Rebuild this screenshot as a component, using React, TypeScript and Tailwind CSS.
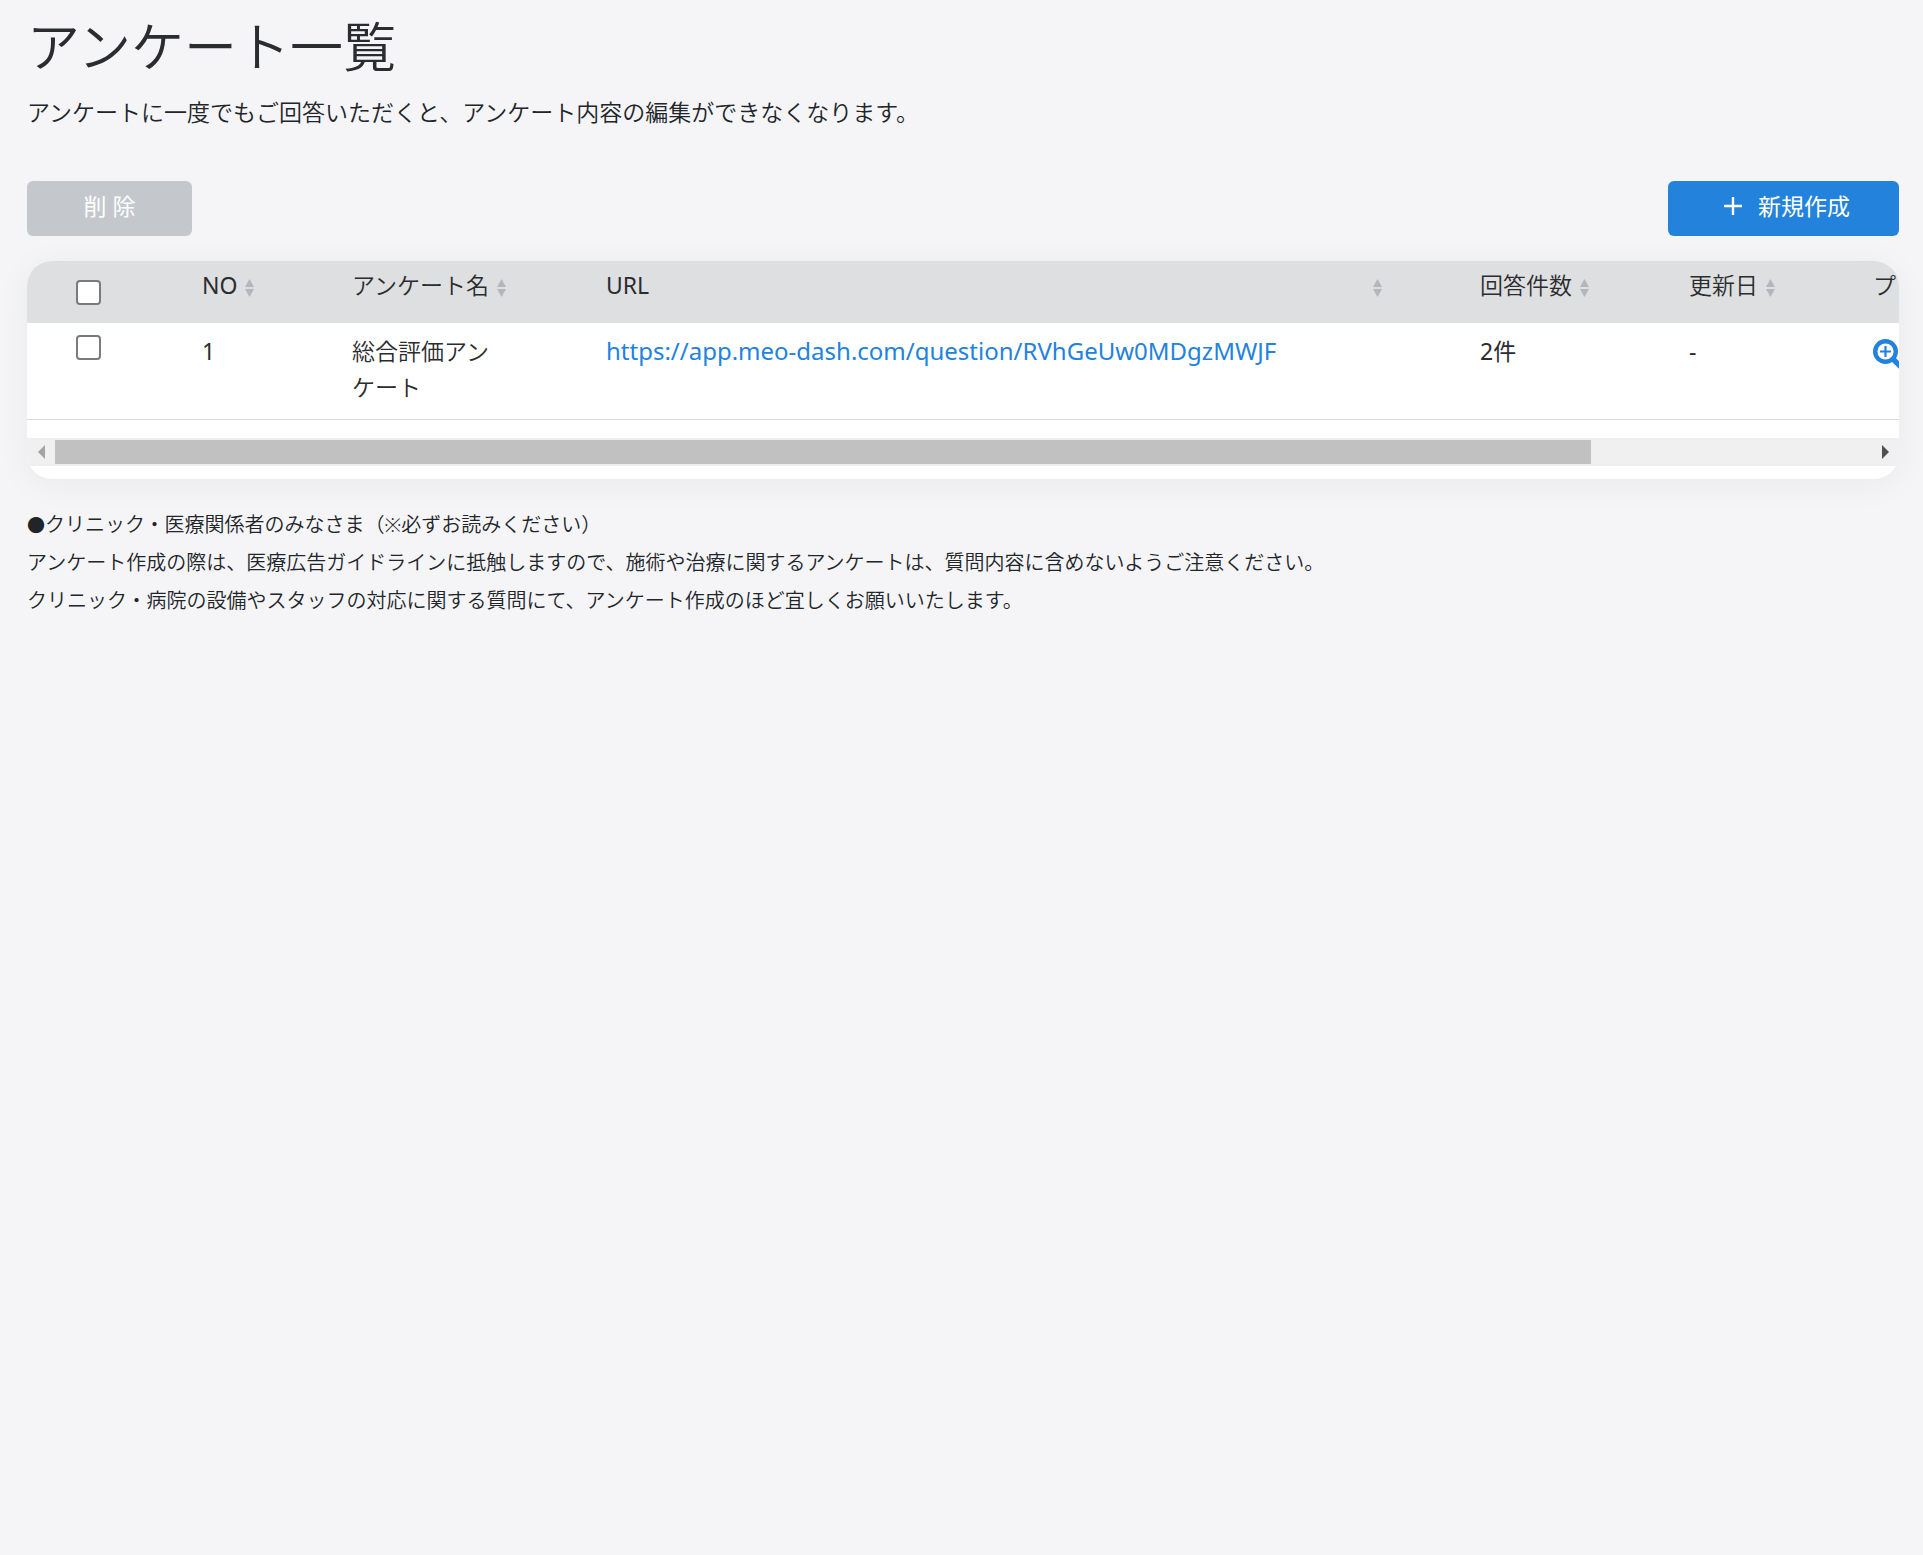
import React, { useRef, useState } from "react";

interface Survey {
  id: number;
  name: string;
  url: string;
  count: number;
  updatedAt: string;
}

const surveys: Survey[] = [
  {
    id: 1,
    name: "総合評価アンケート",
    url: "https://app.meo-dash.com/question/RVhGeUw0MDgzMWJF",
    count: 2,
    updatedAt: "-",
  },
];

const SortIcon = () => (
  <svg viewBox="0 0 9 18" className="mt-1.5 h-[18px] w-[9px] shrink-0 fill-[#b4b6bb]" aria-hidden="true">
    <path d="M4.5 0 9 8H0z" />
    <path d="M0 10h9l-4.5 8z" />
  </svg>
);

const PlusIcon = () => (
  <svg viewBox="0 0 18 18" className="size-[18px]" fill="none" stroke="currentColor" strokeWidth="2.4" aria-hidden="true">
    <path d="M9 0v18M0 9h18" />
  </svg>
);

const ZoomInIcon = () => (
  <svg viewBox="0 0 32 32" className="size-8" fill="none" stroke="currentColor" aria-hidden="true">
    <circle cx="12.5" cy="12.5" r="10.3" strokeWidth="4.4" />
    <path d="M12.5 7v11M7 12.5h11" strokeWidth="2.2" />
    <path d="m20 20 9.5 9.5" strokeWidth="5.4" />
  </svg>
);

interface HeaderCellProps {
  label: string;
  latin?: boolean;
  spread?: boolean;
}

const HeaderCell: React.FC<HeaderCellProps> = ({ label, latin, spread }) => (
  <th className={`px-[49px] pt-1.5 pb-5 text-left align-top ${latin ? "font-normal" : "font-[350]"}`}>
    <button
      type="button"
      className={`flex items-center gap-2 whitespace-nowrap ${spread ? "w-full justify-between" : ""}`}
    >
      {label}
      <SortIcon />
    </button>
  </th>
);

const checkboxClass =
  "block size-[25px] appearance-none rounded-[4px] border-2 border-[#7b7b7b] bg-white checked:bg-[#2282dc]";

const SurveyTable = () => {
  const scroller = useRef<HTMLDivElement>(null);
  const [offset, setOffset] = useState(0);

  const handleScroll = () => {
    const el = scroller.current;
    if (el) setOffset((el.scrollLeft / el.scrollWidth) * 100);
  };

  return (
    <div className="mt-[25px] overflow-hidden rounded-[25px] bg-white pb-[13px] shadow-[0_5px_35px_rgba(0,0,0,0.05)]">
      <div
        ref={scroller}
        onScroll={handleScroll}
        className="overflow-x-auto pb-[18px] [scrollbar-width:none]"
      >
        <table className="w-[2213px] table-fixed border-collapse text-[23px] leading-9 text-[#2b2c2f]">
          <colgroup>
            <col className="w-[126px]" />
            <col className="w-[150px]" />
            <col className="w-[254px]" />
            <col className="w-[874px]" />
            <col className="w-[209px]" />
            <col className="w-[184px]" />
            <col />
          </colgroup>
          <thead className="bg-[#dedfe1]">
            <tr>
              <th className="pt-[19px] pl-[49px] align-top">
                <input type="checkbox" aria-label="すべて選択" className={checkboxClass} />
              </th>
              <HeaderCell label="NO" latin />
              <HeaderCell label="アンケート名" />
              <HeaderCell label="URL" latin spread />
              <HeaderCell label="回答件数" />
              <HeaderCell label="更新日" />
              <th className="px-[49px] pt-1.5 text-left align-top font-[350]">プレビュー</th>
            </tr>
          </thead>
          <tbody>
            {surveys.map((survey) => (
              <tr key={survey.id} className="border-b border-[#d9dadc] align-top">
                <td className="pt-3 pl-[49px]">
                  <input type="checkbox" aria-label={survey.name} className={checkboxClass} />
                </td>
                <td className="px-[49px] pt-2.5">{survey.id}</td>
                <td className="px-[49px] pt-2.5 pb-3.5 font-[350]">{survey.name}</td>
                <td className="px-[49px] pt-2.5">
                  <a href={survey.url} className="text-2xl leading-9 text-[#2282dc]">
                    {survey.url}
                  </a>
                </td>
                <td className="px-[49px] pt-2.5">{survey.count}件</td>
                <td className="px-[49px] pt-2.5">{survey.updatedAt}</td>
                <td className="px-[49px] pt-4">
                  <button type="button" aria-label="プレビュー" className="block text-[#2282dc]">
                    <ZoomInIcon />
                  </button>
                </td>
              </tr>
            ))}
          </tbody>
        </table>
      </div>

      {/* 横スクロールバー */}
      <div className="flex h-7 bg-[#f0f0f0]">
        <button
          type="button"
          aria-label="左へスクロール"
          onClick={() => scroller.current?.scrollBy({ left: -120 })}
          className="flex w-7 items-center justify-center text-[#a3a3a3]"
        >
          <svg viewBox="0 0 7 14" className="h-[14px] w-[7px] fill-current" aria-hidden="true">
            <path d="M7 0v14L0 7z" />
          </svg>
        </button>
        <div className="flex-1 py-[2px]">
          <div className="h-full w-[84.6%] bg-[#c1c1c1]" style={{ marginLeft: `${offset}%` }} />
        </div>
        <button
          type="button"
          aria-label="右へスクロール"
          onClick={() => scroller.current?.scrollBy({ left: 120 })}
          className="flex w-7 items-center justify-center text-[#505050]"
        >
          <svg viewBox="0 0 7 14" className="h-[14px] w-[7px] fill-current" aria-hidden="true">
            <path d="M0 0v14l7-7z" />
          </svg>
        </button>
      </div>
    </div>
  );
};

const App = () => {
  return (
    <main
      lang="ja"
      className="min-h-screen bg-[#f5f5f8] pr-6 pl-[27px] font-['Noto_Sans','Noto_Sans_CJK_JP',sans-serif] text-[#212529]"
    >
      <h1 className="pt-3 text-[53px] leading-[70px] font-[350] text-[#2b2c2f]">アンケート一覧</h1>
      <p className="mt-3 text-[23px] leading-9 font-[350]">
        アンケートに一度でもご回答いただくと、アンケート内容の編集ができなくなります。
      </p>

      <div className="mt-[51px] flex justify-between text-[23px] leading-9 text-white">
        <button type="button" className="h-[55px] w-[165px] rounded-md bg-[#c4c8cd] pb-1.5">
          削 除
        </button>
        <button
          type="button"
          className="flex h-[55px] items-center gap-4 rounded-md bg-[#2282dc] pr-[49px] pb-1.5 pl-14"
        >
          <PlusIcon />
          新規作成
        </button>
      </div>

      <SurveyTable />

      <div className="mt-[27px] text-xl leading-[38px] font-[350]">
        <p>
          <span className="text-lg">●</span>
          クリニック・医療関係者のみなさま（※必ずお読みください）
        </p>
        <p>
          アンケート作成の際は、医療広告ガイドラインに抵触しますので、施術や治療に関するアンケートは、質問内容に含めないようご注意ください。
        </p>
        <p>クリニック・病院の設備やスタッフの対応に関する質問にて、アンケート作成のほど宜しくお願いいたします。</p>
      </div>
    </main>
  );
};

export default App;
